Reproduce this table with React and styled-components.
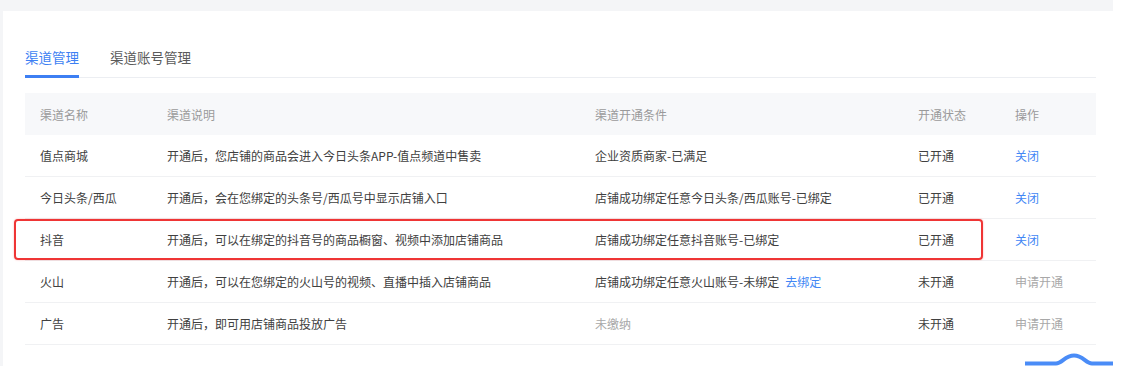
import styled, { createGlobalStyle } from "styled-components";

const GlobalStyle = createGlobalStyle`
  body {
    margin: 0;
    background: #fff;
    font-family: "Noto Sans CJK SC", "Noto Sans", sans-serif;
  }
`;

const Page = styled.div`
  position: relative;
  width: 1113px;
  height: 366px;
  padding: 11px 0 0 3px;
  box-sizing: border-box;
  background: #f4f5f7;
  overflow: hidden;
`;

const Card = styled.div`
  height: 100%;
  background: #fff;
  padding: 36px 17px 0 22px;
  box-sizing: border-box;
`;

const TabBar = styled.div`
  display: flex;
  gap: 31px;
  border-bottom: 1px solid #eceef2;
`;

const Tab = styled.div`
  font-size: 13.5px;
  line-height: 20px;
  padding-bottom: 8px;
  margin-bottom: -1px;
  color: ${(props) => (props.active ? "#3d7ff3" : "#5a5a5a")};
  border-bottom: 3px solid ${(props) => (props.active ? "#3d7ff3" : "transparent")};
`;

const Table = styled.div`
  margin-top: 15px;
  width: 1071px;
`;

const Row = styled.div`
  position: relative;
  display: grid;
  grid-template-columns: 127px 428px 323px 97px 96px;
  align-items: center;
  font-size: 12px;
  color: #404040;
  background: ${(props) => (props.head ? "#f7f8fa" : "#fff")};
  border-bottom: ${(props) => (props.head ? "none" : "1px solid #f0f1f3")};
  height: ${(props) => (props.head ? "42px" : "41px")};

  ${(props) =>
    props.highlighted &&
    `
    &::after {
      content: "";
      position: absolute;
      left: -11px;
      top: 0px;
      width: 969px;
      height: 41px;
      box-sizing: border-box;
      border: 2.5px solid #ef3535;
      border-radius: 4px;
      box-shadow: 0 0 2px rgba(240, 58, 58, 0.4);
    }
  `}
`;

const Cell = styled.div`
  padding-left: 15px;
  white-space: nowrap;
`;

const HeadCell = styled(Cell)`
  color: #9a9a9a;
`;

const Link = styled.span`
  color: #4287f5;
  margin-left: ${(props) => (props.inline ? "6px" : "0")};
`;

const Muted = styled.span`
  color: #a8a8a8;
`;

const PeekButton = styled.svg`
  position: absolute;
  left: 1025px;
  top: 352px;
`;

const rows = [
  {
    name: "值点商城",
    desc: "开通后，您店铺的商品会进入今日头条APP-值点频道中售卖",
    cond: "企业资质商家-已满足",
    status: "已开通",
    open: true,
  },
  {
    name: "今日头条/西瓜",
    desc: "开通后，会在您绑定的头条号/西瓜号中显示店铺入口",
    cond: "店铺成功绑定任意今日头条/西瓜账号-已绑定",
    status: "已开通",
    open: true,
  },
  {
    name: "抖音",
    desc: "开通后，可以在绑定的抖音号的商品橱窗、视频中添加店铺商品",
    cond: "店铺成功绑定任意抖音账号-已绑定",
    status: "已开通",
    open: true,
    highlighted: true,
  },
  {
    name: "火山",
    desc: "开通后，可以在您绑定的火山号的视频、直播中插入店铺商品",
    cond: "店铺成功绑定任意火山账号-未绑定",
    bindLink: true,
    status: "未开通",
  },
  {
    name: "广告",
    desc: "开通后，即可用店铺商品投放广告",
    cond: "未缴纳",
    condMuted: true,
    status: "未开通",
  },
];

export default function App() {
  return (
    <>
      <GlobalStyle />
      <Page>
        <Card>
          <TabBar>
            <Tab active>渠道管理</Tab>
            <Tab>渠道账号管理</Tab>
          </TabBar>

          <Table>
            <Row head>
              <HeadCell>渠道名称</HeadCell>
              <HeadCell>渠道说明</HeadCell>
              <HeadCell>渠道开通条件</HeadCell>
              <HeadCell>开通状态</HeadCell>
              <HeadCell>操作</HeadCell>
            </Row>
            {rows.map((row) => (
              <Row key={row.name} highlighted={row.highlighted}>
                <Cell>{row.name}</Cell>
                <Cell>{row.desc}</Cell>
                <Cell>
                  {row.condMuted ? <Muted>{row.cond}</Muted> : row.cond}
                  {row.bindLink && <Link inline>去绑定</Link>}
                </Cell>
                <Cell>{row.status}</Cell>
                <Cell>
                  {row.open ? <Link>关闭</Link> : <Muted>申请开通</Muted>}
                </Cell>
              </Row>
            ))}
          </Table>
        </Card>

        <PeekButton width="88" height="14" viewBox="0 0 88 14">
          <path
            d="M0 11.5 H31 C37 11.5 40 3.5 49 3.5 C58 3.5 61 11.5 67 11.5 H88"
            fill="none"
            stroke="#4a8cf7"
            strokeWidth="4"
          />
        </PeekButton>
      </Page>
    </>
  );
}
